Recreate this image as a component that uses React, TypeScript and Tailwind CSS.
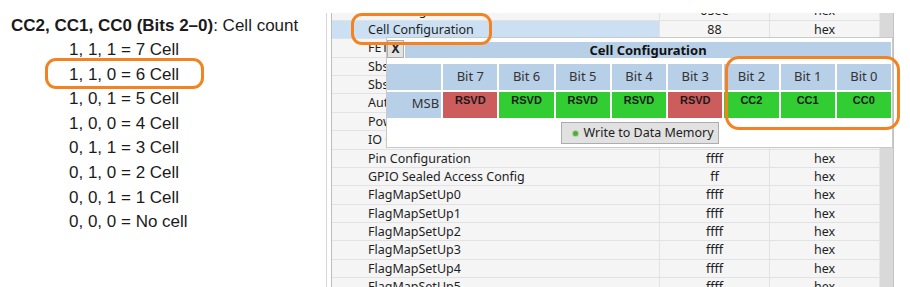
import React from "react";

type Row = { name: string; value: string; fmt: string; active?: boolean };

const ROWS: Row[] = [
  { name: "DA Configuration", value: "05ee", fmt: "hex" },
  { name: "Cell Configuration", value: "88", fmt: "hex", active: true },
  { name: "FET Options", value: "0d", fmt: "hex" },
  { name: "Sbs Gauge Configuration", value: "04", fmt: "hex" },
  { name: "Sbs Configuration", value: "00", fmt: "hex" },
  { name: "Auth Config", value: "00", fmt: "hex" },
  { name: "Power Config", value: "0000", fmt: "hex" },
  { name: "IO Config", value: "00", fmt: "hex" },
  { name: "Pin Configuration", value: "ffff", fmt: "hex" },
  { name: "GPIO Sealed Access Config", value: "ff", fmt: "hex" },
  { name: "FlagMapSetUp0", value: "ffff", fmt: "hex" },
  { name: "FlagMapSetUp1", value: "ffff", fmt: "hex" },
  { name: "FlagMapSetUp2", value: "ffff", fmt: "hex" },
  { name: "FlagMapSetUp3", value: "ffff", fmt: "hex" },
  { name: "FlagMapSetUp4", value: "ffff", fmt: "hex" },
  { name: "FlagMapSetUp5", value: "ffff", fmt: "hex" },
];

const CELL_LINES = [
  "1, 1, 1 = 7 Cell",
  "1, 1, 0 = 6 Cell",
  "1, 0, 1 = 5 Cell",
  "1, 0, 0 = 4 Cell",
  "0, 1, 1 = 3 Cell",
  "0, 1, 0 = 2 Cell",
  "0, 0, 1 = 1 Cell",
  "0, 0, 0 = No cell",
];

// bit 7 .. bit 0
const BITS = [
  { label: "RSVD", reserved: true },
  { label: "RSVD", reserved: false },
  { label: "RSVD", reserved: false },
  { label: "RSVD", reserved: false },
  { label: "RSVD", reserved: true },
  { label: "CC2", reserved: false },
  { label: "CC1", reserved: false },
  { label: "CC0", reserved: false },
];

const UI_FONT = "font-['Noto_Sans','Open_Sans',sans-serif]";

function DataRow({ row, first }: { row: Row; first?: boolean }) {
  return (
    <div
      className={`flex h-[18.4px] shrink-0 border-b border-[#e2e2e2] text-[12.5px] leading-[17px] text-[#1e1e1e] ${
        first ? "-mt-[10.6px]" : ""
      }`}
    >
      <div
        className={`w-[328px] truncate border-r border-[#e2e2e2] pl-[36px] ${
          row.active ? "bg-[#cce0f4]" : ""
        }`}
      >
        {row.name}
      </div>
      <div className="w-[110px] border-r border-[#e2e2e2] text-center">{row.value}</div>
      <div className="flex-1 text-center">{row.fmt}</div>
    </div>
  );
}

function CellConfigPopup() {
  return (
    <div
      className={`absolute left-[60px] top-[37px] flex h-[111px] w-[507px] flex-col border border-[#c9c9c9] bg-white ${UI_FONT}`}
    >
      <div className="flex h-[26px] shrink-0 items-start">
        <div className="mt-[2px] flex h-[18px] w-[17px] items-center justify-center border border-[#adadad] bg-[#e3e3e3] text-[12px] font-bold leading-none text-[#222]">
          X
        </div>
        <div className="ml-[1px] mr-[1px] mt-[4px] flex h-[16px] flex-1 items-center justify-center bg-[#b8cfe8] text-[13px] font-bold leading-none text-[#111]">
          Cell Configuration
        </div>
      </div>

      <div className="grid w-[504px] grid-cols-9 gap-[2px] bg-white">
        <div className="h-[26px] bg-[#b8cfe8]" />
        {[7, 6, 5, 4, 3, 2, 1, 0].map((b) => (
          <div
            key={b}
            className="h-[26px] bg-[#b8cfe8] pt-[4px] text-center text-[13px] leading-[16px] text-[#333]"
          >
            Bit {b}
          </div>
        ))}
        <div className="h-[26px] bg-[#b8cfe8] pr-[2px] pt-[3px] text-right text-[13px] leading-[16px] text-[#333]">
          MSB
        </div>
        {BITS.map((bit, i) => (
          <div
            key={i}
            className={`h-[26px] pt-[2px] text-center font-['Liberation_Sans',Arial,sans-serif] text-[11px] font-bold leading-[13px] text-[#1a1a1a] ${
              bit.reserved ? "bg-[#cd5c5c]" : "bg-[#32cd32]"
            }`}
          >
            {bit.label}
          </div>
        ))}
      </div>

      <div className="flex flex-1 items-start justify-center pt-[4px]">
        <div className="flex h-[22px] w-[158px] items-center gap-[6px] border border-[#adadad] bg-[#e1e1e1] pl-[11px] text-[12.5px] leading-none text-[#222]">
          <span className="inline-block h-[5px] w-[5px] rounded-full bg-[#5aa845] ring-1 ring-[#a9d89a]" />
          <span>Write to Data Memory</span>
        </div>
      </div>
    </div>
  );
}

export default function App() {
  return (
    <div className="relative flex h-[287px] w-[910px] overflow-hidden bg-white">
      {/* left: datasheet excerpt */}
      <div className="w-[326px] shrink-0 pt-[14px] font-['Liberation_Sans',Arial,sans-serif] text-[17px] text-[#1b1b1b]">
        <div className="h-[24px] pl-[11px] leading-[24px] whitespace-nowrap">
          <span className="font-bold">CC2, CC1, CC0 (Bits 2–0)</span>: Cell count
        </div>
        <div className="pl-[69px] leading-[24.6px]">
          {CELL_LINES.map((l) => (
            <div key={l}>{l}</div>
          ))}
        </div>
      </div>

      {/* right: data memory table */}
      <div className="relative flex flex-1 flex-col">
        <div className="h-[13px] shrink-0" />
        <div className="flex min-h-0 flex-1 border-l border-[#d6d6d6] pl-[4px]">
          <div className={`flex flex-1 flex-col overflow-hidden border-l border-[#bdbdbd] bg-[#f5f5f5] ${UI_FONT}`}>
            {ROWS.map((r, i) => (
              <DataRow key={r.name} row={r} first={i === 0} />
            ))}
          </div>
          <div className="w-[15px] shrink-0 border-l border-[#e6e6e6] border-r border-r-[#c2c2c2] bg-[#d9d9d9]" />
          <div className="w-[16px] shrink-0" />
        </div>
        <CellConfigPopup />
      </div>

      {/* orange annotations */}
      <div className="pointer-events-none absolute left-[45px] top-[58px] h-[31px] w-[159px] rounded-[11px] border-[3px] border-[#f58220]" />
      <div className="pointer-events-none absolute left-[351px] top-[13px] h-[32px] w-[141px] rounded-[11px] border-[3px] border-[#f58220]" />
      <div className="pointer-events-none absolute left-[725px] top-[56px] h-[74px] w-[175px] rounded-[14px] border-[3px] border-[#f58220]" />
    </div>
  );
}
